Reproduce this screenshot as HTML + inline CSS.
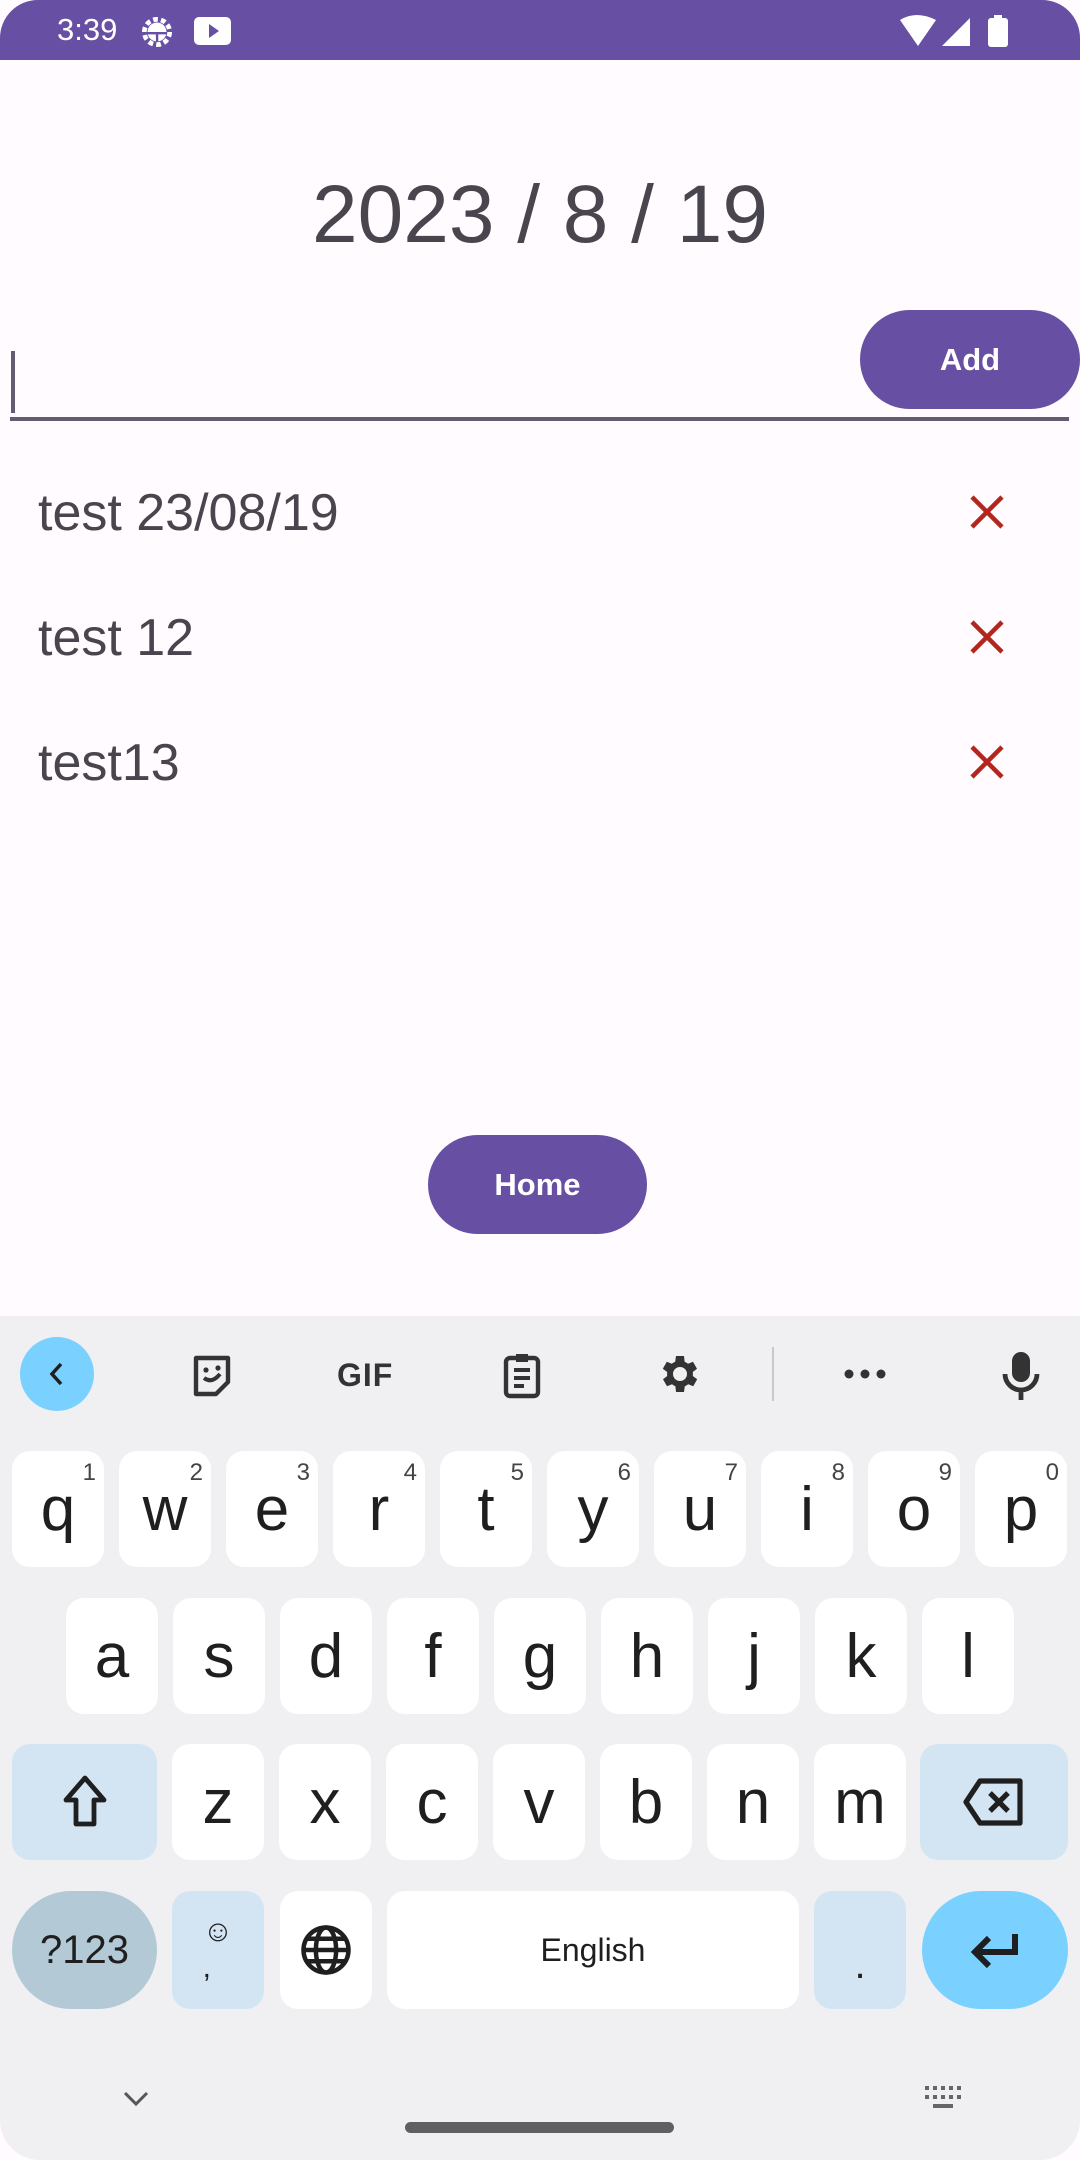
<!DOCTYPE html>
<html><head><meta charset="utf-8"><style>
*{margin:0;padding:0;box-sizing:border-box}
body{width:1080px;height:2160px;background:#fffbfe;font-family:"Liberation Sans",sans-serif;position:relative;overflow:hidden}
.a{position:absolute}
.status{left:0;top:0;width:1080px;height:60px;background:#674fa3;border-radius:38px 38px 0 0}
.btn{background:#674fa3;color:#fff;font-weight:bold;font-size:31px;display:flex;align-items:center;justify-content:center;border-radius:50px}
.item{left:38px;font-size:52px;color:#49454f;line-height:1}
.kb{left:0;top:1316px;width:1080px;height:844px;background:#f0f0f2;border-radius:0 0 40px 40px}
.key{background:#fff;border-radius:18px;display:flex;align-items:center;justify-content:center;font-size:62px;color:#1f1f1f;width:92px;height:116px}
.key sup{position:absolute;right:8px;top:8px;font-size:24px;color:#444}
.mod{background:#d3e4f3}
</style></head><body>
<div class="a status"></div>
<div class="a" style="left:57px;top:12px;color:#fff;font-size:31px">3:39</div>
<svg class="a" style="left:138px;top:13px" width="38" height="38" viewBox="0 0 24 24"><circle cx="12" cy="12" r="8" fill="none" stroke="#fff" stroke-width="3" stroke-dasharray="3 2"/><circle cx="12" cy="12" r="6" fill="#fff"/><rect x="6" y="12" width="12" height="1.5" fill="#674fa3"/><rect x="11.3" y="12" width="1.5" height="6" fill="#674fa3"/></svg>
<div class="a" style="left:194px;top:17px;width:37px;height:28px;background:#fff;border-radius:5px"></div>
<div class="a" style="left:209px;top:24px;width:0;height:0;border-left:10px solid #674fa3;border-top:7px solid transparent;border-bottom:7px solid transparent"></div>
<svg class="a" style="left:898px;top:14px" width="112" height="34" viewBox="0 0 112 34"><path d="M2 6 Q18 -4 38 6 L20 32Z" fill="#fff"/><path d="M44 32 L72 4 L72 32Z" fill="#fff"/><rect x="90" y="4" width="20" height="29" rx="3" fill="#fff"/><rect x="96" y="1" width="8" height="4" fill="#fff"/></svg>

<div class="a" style="left:0;width:1080px;top:169px;text-align:center;font-size:82px;color:#49454f;line-height:92px">2023 / 8 / 19</div>

<div class="a" style="left:11px;top:351px;width:4px;height:62px;background:#625b71"></div>
<div class="a" style="left:10px;top:417px;width:1059px;height:4px;background:#625b71"></div>
<div class="a btn" style="left:860px;top:310px;width:220px;height:99px">Add</div>

<div class="a item" style="top:487px">test 23/08/19</div>
<div class="a item" style="top:612px">test 12</div>
<div class="a item" style="top:737px">test13</div>
<svg class="a" style="left:969px;top:494px" width="36" height="36" viewBox="0 0 36 36"><path d="M3 3L33 33M33 3L3 33" stroke="#b3261e" stroke-width="4.5"/></svg>
<svg class="a" style="left:969px;top:619px" width="36" height="36" viewBox="0 0 36 36"><path d="M3 3L33 33M33 3L3 33" stroke="#b3261e" stroke-width="4.5"/></svg>
<svg class="a" style="left:969px;top:744px" width="36" height="36" viewBox="0 0 36 36"><path d="M3 3L33 33M33 3L3 33" stroke="#b3261e" stroke-width="4.5"/></svg>

<div class="a btn" style="left:428px;top:1135px;width:219px;height:99px">Home</div>

<div class="a kb"></div>
<div class="a" style="left:20px;top:1337px;width:74px;height:74px;border-radius:50%;background:#7ad0ff"></div>
<svg class="a" style="left:43px;top:1360px" width="28" height="28" viewBox="0 0 28 28"><path d="M18 4L9 14L18 24" fill="none" stroke="#1f1f1f" stroke-width="3.5"/></svg>
<svg class="a" style="left:188px;top:1352px" width="48" height="48" viewBox="0 0 24 24"><path d="M4 3h16v12l-6 6H4z" fill="none" stroke="#333" stroke-width="2.2" stroke-linejoin="round"/><circle cx="9" cy="9" r="1.3" fill="#333"/><circle cx="15" cy="8" r="1.3" fill="#333"/><path d="M8 13q4 3 8-2" fill="none" stroke="#333" stroke-width="2"/></svg>
<div class="a" style="left:337px;top:1357px;font-size:32px;font-weight:bold;color:#333;letter-spacing:1px">GIF</div>
<svg class="a" style="left:498px;top:1350px" width="48" height="50" viewBox="0 0 24 25"><rect x="4" y="4" width="16" height="19" rx="2" fill="none" stroke="#333" stroke-width="2.2"/><rect x="9" y="2" width="6" height="4" fill="#333"/><path d="M8 10h8M8 14h8M8 18h5" stroke="#333" stroke-width="2"/></svg>
<svg class="a" style="left:654px;top:1350px" width="48" height="48" viewBox="0 0 24 24"><path fill="#333" d="M19.4 13a7.5 7.5 0 000-2l2.1-1.6-2-3.5-2.5 1a7.4 7.4 0 00-1.7-1L15 3h-4l-.4 2.9a7.4 7.4 0 00-1.7 1l-2.5-1-2 3.5L6.6 11a7.5 7.5 0 000 2l-2.1 1.6 2 3.5 2.5-1a7.4 7.4 0 001.7 1L11 21h4l.4-2.9a7.4 7.4 0 001.7-1l2.5 1 2-3.5zM13 15.5a3.5 3.5 0 110-7 3.5 3.5 0 010 7z"/></svg>
<div class="a" style="left:772px;top:1347px;width:2px;height:54px;background:#c8c8c8"></div>
<svg class="a" style="left:843px;top:1364px" width="44" height="20"><circle cx="6" cy="10" r="4.5" fill="#333"/><circle cx="22" cy="10" r="4.5" fill="#333"/><circle cx="38" cy="10" r="4.5" fill="#333"/></svg>
<svg class="a" style="left:998px;top:1350px" width="46" height="52" viewBox="0 0 23 26"><rect x="7" y="1" width="9" height="15" rx="4.5" fill="#333"/><path d="M3.5 12a8 8 0 0016 0M11.5 20v5" fill="none" stroke="#333" stroke-width="2.4"/></svg>

<div class="a key" style="left:12px;top:1451px">q<sup>1</sup></div>
<div class="a key" style="left:119px;top:1451px">w<sup>2</sup></div>
<div class="a key" style="left:226px;top:1451px">e<sup>3</sup></div>
<div class="a key" style="left:333px;top:1451px">r<sup>4</sup></div>
<div class="a key" style="left:440px;top:1451px">t<sup>5</sup></div>
<div class="a key" style="left:547px;top:1451px">y<sup>6</sup></div>
<div class="a key" style="left:654px;top:1451px">u<sup>7</sup></div>
<div class="a key" style="left:761px;top:1451px">i<sup>8</sup></div>
<div class="a key" style="left:868px;top:1451px">o<sup>9</sup></div>
<div class="a key" style="left:975px;top:1451px">p<sup>0</sup></div>

<div class="a key" style="left:66px;top:1598px">a</div>
<div class="a key" style="left:173px;top:1598px">s</div>
<div class="a key" style="left:280px;top:1598px">d</div>
<div class="a key" style="left:387px;top:1598px">f</div>
<div class="a key" style="left:494px;top:1598px">g</div>
<div class="a key" style="left:601px;top:1598px">h</div>
<div class="a key" style="left:708px;top:1598px">j</div>
<div class="a key" style="left:815px;top:1598px">k</div>
<div class="a key" style="left:922px;top:1598px">l</div>

<div class="a key mod" style="left:12px;top:1744px;width:145px"><svg width="50" height="56" viewBox="0 0 25 28"><path d="M12.5 2L3 13h5v12h9V13h5z" fill="none" stroke="#1f1f1f" stroke-width="2.4" stroke-linejoin="round"/></svg></div>
<div class="a key" style="left:172px;top:1744px">z</div>
<div class="a key" style="left:279px;top:1744px">x</div>
<div class="a key" style="left:386px;top:1744px">c</div>
<div class="a key" style="left:493px;top:1744px">v</div>
<div class="a key" style="left:600px;top:1744px">b</div>
<div class="a key" style="left:707px;top:1744px">n</div>
<div class="a key" style="left:814px;top:1744px">m</div>
<div class="a key mod" style="left:920px;top:1744px;width:148px"><svg width="64" height="50" viewBox="0 0 32 25"><path d="M9 2h20v21H9L2 12.5z" fill="none" stroke="#1f1f1f" stroke-width="2.6" stroke-linejoin="round"/><path d="M14 8l9 9M23 8l-9 9" stroke="#1f1f1f" stroke-width="2.6"/></svg></div>

<div class="a key" style="left:12px;top:1891px;width:145px;height:118px;background:#b3cad6;border-radius:59px;font-size:40px">?123</div>
<div class="a key mod" style="left:172px;top:1891px;height:118px;flex-direction:column;font-size:30px;line-height:1.2">☺<br>,</div>
<div class="a key" style="left:280px;top:1891px;height:118px"><svg width="54" height="54" viewBox="0 0 24 24" fill="none" stroke="#1f1f1f" stroke-width="2"><circle cx="12" cy="12" r="10"/><ellipse cx="12" cy="12" rx="4.5" ry="10"/><path d="M2 12h20M3.5 7h17M3.5 17h17"/></svg></div>
<div class="a key" style="left:387px;top:1891px;width:412px;height:118px;font-size:32px">English</div>
<div class="a key mod" style="left:814px;top:1891px;height:118px;font-size:40px;padding-top:30px">.</div>
<div class="a key" style="left:922px;top:1891px;width:146px;height:118px;background:#7ad0ff;border-radius:59px"><svg width="52" height="40" viewBox="0 0 26 20"><path d="M23 2v9H4M10 4l-7 7 7 7" fill="none" stroke="#1f1f1f" stroke-width="3"/></svg></div>

<svg class="a" style="left:123px;top:2090px" width="26" height="18"><path d="M2 3l11 11 11-11" fill="none" stroke="#555" stroke-width="3"/></svg>
<svg class="a" style="left:925px;top:2086px" width="40" height="30"><g fill="#666"><rect x="0" y="0" width="4" height="4"/><rect x="8" y="0" width="4" height="4"/><rect x="16" y="0" width="4" height="4"/><rect x="24" y="0" width="4" height="4"/><rect x="32" y="0" width="4" height="4"/><rect x="0" y="9" width="4" height="4"/><rect x="8" y="9" width="4" height="4"/><rect x="16" y="9" width="4" height="4"/><rect x="24" y="9" width="4" height="4"/><rect x="32" y="9" width="4" height="4"/><rect x="8" y="18" width="20" height="4"/></g></svg>
<div class="a" style="left:405px;top:2122px;width:269px;height:11px;border-radius:6px;background:#606060"></div>
</body></html>
